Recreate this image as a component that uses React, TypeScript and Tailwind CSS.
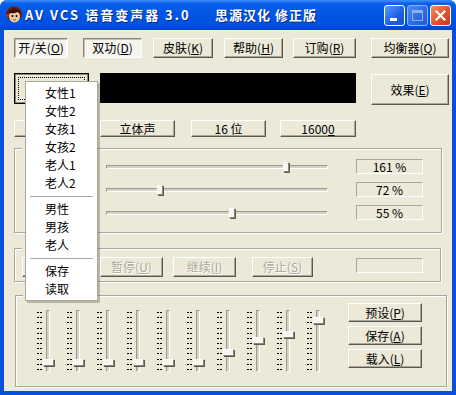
import React from "react";

const font = "font-['Noto_Sans_CJK_SC',sans-serif]";

type BtnState = "up" | "down" | "off" | "focus";

const looks: Record<BtnState, string> = {
  up: "border-t-white border-l-white border-r-[#5a5850] border-b-[#5a5850] shadow-[inset_-1px_-1px_0_#aca899] text-black",
  down: "border-t-[#8a8778] border-l-[#8a8778] border-r-white border-b-white shadow-[inset_1px_1px_0_#c4c1b0] bg-[#f5f4ef] text-black",
  off: "border-t-white border-l-white border-r-[#5a5850] border-b-[#5a5850] shadow-[inset_-1px_-1px_0_#aca899] text-[#aca899] [text-shadow:1px_1px_0_#fff]",
  focus: "border-black shadow-[inset_1px_1px_0_#8a8778,inset_-1px_-1px_0_#8a8778] p-[3px]",
};

function Btn({
  children,
  className = "",
  state = "up",
}: {
  children?: React.ReactNode;
  className?: string;
  state?: BtnState;
}) {
  return (
    <div
      className={`flex shrink-0 items-center justify-center border text-[12px] leading-none whitespace-pre ${looks[state]} ${className}`}
    >
      {children}
    </div>
  );
}

function Key({ k }: { k: string }) {
  return (
    <>
      (<u>{k}</u>)
    </>
  );
}

function HSlider({ pos }: { pos: number }) {
  return (
    <div className="relative flex h-[12px] w-[222px] items-center">
      <div className="h-[4px] w-full border border-t-[#9d9a8a] border-l-[#9d9a8a] border-r-white border-b-white bg-[#d6d3c6]" />
      <div
        className="absolute top-[1px] h-[10px] w-[6px] rounded-b-[1px] border border-[#8a8778] border-t-white border-l-white bg-[#f7f6f1] shadow-[1px_1px_0_#5a5850]"
        style={{ left: pos }}
      />
    </div>
  );
}

function VSlider({ top }: { top: number }) {
  return (
    <div className="relative flex h-[62px] w-[22px] shrink-0">
      <div className="flex h-full w-[5px] flex-col justify-between py-[2px]">
        {Array.from({ length: 12 }).map((_, i) => (
          <div
            key={i}
            className="h-px w-[5px] bg-[repeating-linear-gradient(to_right,#000_0_2px,transparent_2px_3px)]"
          />
        ))}
      </div>
      <div className="ml-[4px] h-full w-[4px] border border-t-[#9d9a8a] border-l-[#9d9a8a] border-r-white border-b-white bg-[#d6d3c6]" />
      <div
        className="absolute left-[6px] h-[7px] w-[11px] border border-[#8a8778] border-t-white border-l-white bg-[#f7f6f1] shadow-[1px_1px_0_#5a5850]"
        style={{ top }}
      />
    </div>
  );
}

function Group({ className = "", children }: { className?: string; children?: React.ReactNode }) {
  return (
    <div
      className={`relative border border-[#aca899] shadow-[inset_1px_1px_0_#fff,1px_1px_0_#fff] ${className}`}
    >
      {/* caption sits under the popup menu; only the gap in the frame shows */}
      <span className="absolute left-[7px] top-[-2px] h-[3px] w-[60px] bg-[#ece9d8]" />
      {children}
    </div>
  );
}

const menu: (string | null)[] = [
  "女性1",
  "女性2",
  "女孩1",
  "女孩2",
  "老人1",
  "老人2",
  null,
  "男性",
  "男孩",
  "老人",
  null,
  "保存",
  "读取",
];

const eq = [49, 49, 49, 49, 49, 49, 39, 27, 21, 7];

function TitleBar() {
  return (
    <div className="flex h-[30px] items-center bg-[linear-gradient(to_bottom,#3d8ff7_0%,#0a5fe9_12%,#0055e5_45%,#0052e0_80%,#0044cc_100%)] pl-[5px] pr-[5px]">
      <svg width="18" height="18" viewBox="0 0 18 18" className="shrink-0">
        <ellipse cx="9" cy="8" rx="8" ry="7.5" fill="#6b1d0c" />
        <ellipse cx="9.5" cy="10.5" rx="5.5" ry="6" fill="#f6c89a" />
        <path d="M3 7 Q6 2 12 3 Q15 4 16 8 L13 6 Q9 8 5 7 Z" fill="#3a0e06" />
        <circle cx="7.5" cy="10" r="1" fill="#000" />
        <circle cx="11.5" cy="10" r="1" fill="#000" />
        <path d="M8 13.5 Q9.5 15 11 13.5" stroke="#c0392b" strokeWidth="1" fill="none" />
        <path d="M1 9 L4 8 L3 12 Z" fill="#e03a1e" />
      </svg>
      <span className="ml-[2px] w-[190px] shrink-0 whitespace-pre text-[13px] font-bold tracking-[2px] text-white [text-shadow:1px_1px_0_#0a2a8a]">
        AV VCS 语音变声器 3.0
      </span>
      <span className="whitespace-pre text-[13px] font-bold tracking-[1px] text-white [text-shadow:1px_1px_0_#0a2a8a]">
        思源汉化 修正版
      </span>
      <div className="ml-auto flex gap-[2px]">
        <div className="flex h-[21px] w-[21px] items-end rounded-[3px] border border-white bg-[linear-gradient(135deg,#5a9bff,#1d5ee4_60%,#1a4fd0)] pb-[4px] pl-[5px]">
          <div className="h-[3px] w-[7px] bg-white" />
        </div>
        <div className="flex h-[21px] w-[21px] items-center justify-center rounded-[3px] border border-[#8fb2f2] bg-[linear-gradient(135deg,#4d8cf6,#2a68e6_60%,#2559d6)]">
          <div className="h-[11px] w-[11px] border border-t-[3px] border-[#8fb2f2]" />
        </div>
        <div className="flex h-[21px] w-[21px] items-center justify-center rounded-[3px] border border-white bg-[linear-gradient(135deg,#f08d6a,#e0542c_55%,#c8391a)]">
          <svg width="11" height="11" viewBox="0 0 11 11">
            <path d="M1.5 1.5 L9.5 9.5 M9.5 1.5 L1.5 9.5" stroke="#fff" strokeWidth="2.2" strokeLinecap="square" />
          </svg>
        </div>
      </div>
    </div>
  );
}

export default function App() {
  return (
    <div className={`h-[395px] w-[456px] overflow-hidden rounded-t-[7px] bg-[#0a4fdc] ${font}`}>
      <TitleBar />
      <div className="relative mx-[4px] flex h-[361px] w-[448px] flex-col bg-[#ece9d8] text-black">
        {/* top buttons */}
        <div className="mt-[8px] flex h-[20px]">
          <Btn state="down" className="ml-[10px] w-[54px]">
            开/关<Key k="O" />
          </Btn>
          <Btn state="down" className="ml-[15px] w-[59px]">
            双功<Key k="D" />
          </Btn>
          <Btn className="ml-[11px] w-[60px]">
            皮肤<Key k="K" />
          </Btn>
          <Btn className="ml-[11px] w-[59px]">
            帮助<Key k="H" />
          </Btn>
          <Btn className="ml-[10px] w-[63px]">
            订购<Key k="R" />
          </Btn>
          <Btn className="ml-[15px] w-[78px]">
            均衡器<Key k="Q" />
          </Btn>
        </div>

        <div className="mt-[15px] flex h-[32px] items-start">
          <Btn state="focus" className="ml-[10px] h-[31px] w-[75px]">
            <div className="h-full w-full border border-dotted border-black" />
          </Btn>
          <div className="ml-[11px] h-[30px] w-[256px] bg-black" />
          <Btn className="ml-[15px] mt-[1px] h-[31px] w-[78px]">
            效果<Key k="E" />
          </Btn>
        </div>

        <div className="mt-[15px] flex h-[17px]">
          <Btn className="ml-[10px] w-[75px]" />
          <Btn className="ml-[11px] w-[75px]">立体声</Btn>
          <Btn className="ml-[16px] w-[75px]">16 位</Btn>
          <Btn className="ml-[14px] w-[76px]">
            1600<u>0</u>
          </Btn>
        </div>

        <Group className="ml-[10px] mt-[11px] h-[85px] w-[428px] pt-[6px]">
          {[
            { pos: 177, val: "161 %" },
            { pos: 51, val: "72 %" },
            { pos: 123, val: "55 %" },
          ].map((r) => (
            <div key={r.val} className="flex h-[23px] items-center">
              <span className="w-[91px] shrink-0" />
              <HSlider pos={r.pos} />
              <div className="ml-[28px] flex h-[15px] w-[67px] items-center justify-center border border-t-[#aca899] border-l-[#aca899] border-r-white border-b-white text-[12px] leading-none whitespace-pre">
                {r.val}
              </div>
            </div>
          ))}
        </Group>

        <Group className="ml-[10px] mt-[15px] h-[34px] w-[427px] pt-[8px]">
          <div className="flex h-[20px]">
            <Btn className="ml-[7px] w-[63px]" />
            <Btn state="off" className="ml-[15px] w-[63px]">
              暂停<Key k="U" />
            </Btn>
            <Btn state="off" className="ml-[10px] w-[63px]">
              继续<Key k="I" />
            </Btn>
            <Btn state="off" className="ml-[16px] w-[61px]">
              停止<Key k="S" />
            </Btn>
            <div className="ml-[43px] mt-[1px] h-[15px] w-[67px] border border-t-[#aca899] border-l-[#aca899] border-r-white border-b-white" />
          </div>
        </Group>

        <Group className="ml-[11px] mt-[13px] flex h-[92px] w-[432px]">
          <div className="ml-[21px] mt-[14px] flex gap-[8px]">
            {eq.map((t, i) => (
              <VSlider key={i} top={t} />
            ))}
          </div>
          <div className="ml-auto mr-[24px] mt-[7px] flex flex-col gap-[4px]">
            <Btn className="h-[19px] w-[74px]">
              预设<Key k="P" />
            </Btn>
            <Btn className="h-[19px] w-[74px]">
              保存<Key k="A" />
            </Btn>
            <Btn className="h-[19px] w-[74px]">
              载入<Key k="L" />
            </Btn>
          </div>
        </Group>

        {/* popup menu */}
        <div className="absolute left-[21px] top-[51px] flex w-[73px] flex-col border border-[#aca899] bg-white py-[2px] shadow-[2px_2px_0_rgba(0,0,0,0.22)]">
          {menu.map((m, i) =>
            m ? (
              <div key={i} className="flex h-[18px] items-center pl-[19px] text-[12px] leading-none">
                {m}
              </div>
            ) : (
              <div key={i} className="flex h-[8px] items-center px-[4px]">
                <div className="h-px w-full bg-[#aca899]" />
              </div>
            )
          )}
        </div>
      </div>
    </div>
  );
}
